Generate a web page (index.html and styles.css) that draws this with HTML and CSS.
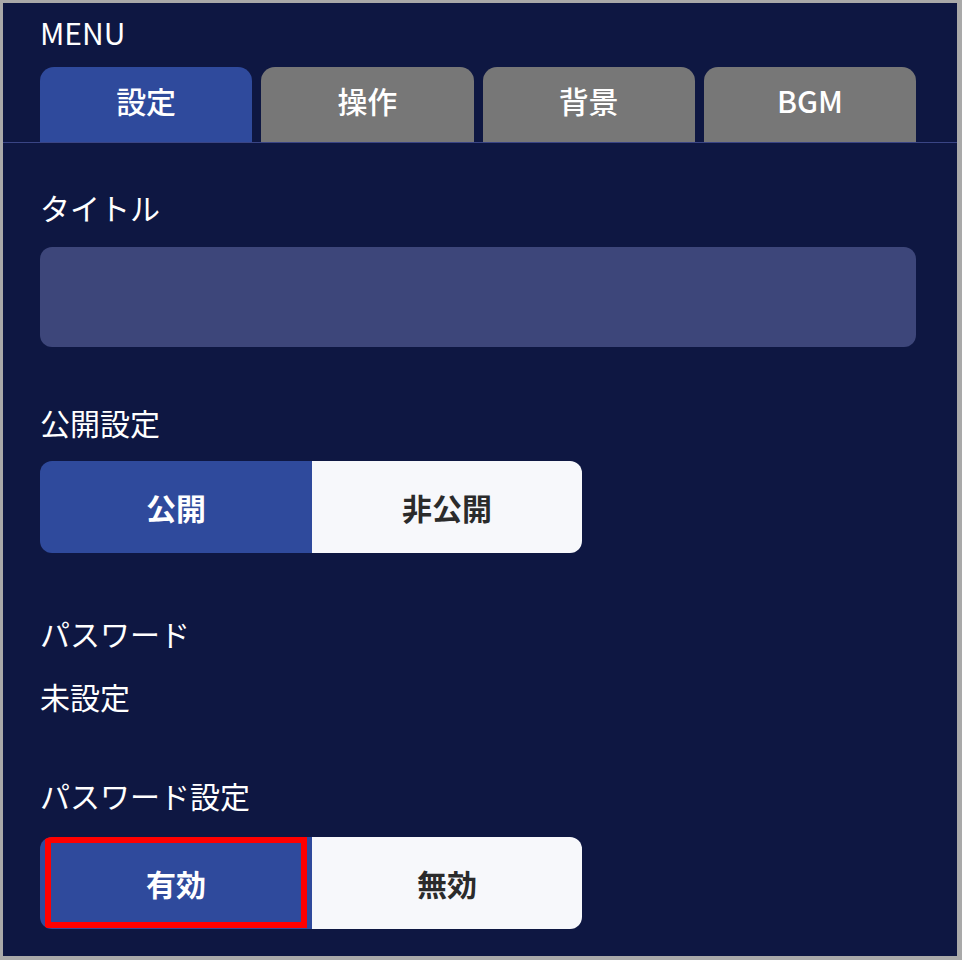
FILE: index.html
```html
<!DOCTYPE html>
<html lang="ja">

<head>
  <meta charset="UTF-8">
  <meta name="viewport" content="width=device-width, initial-scale=1.0">
  <title>MENU</title>
  <link rel="stylesheet" href="styles.css">
</head>

<body>
  <main class="panel">
    <h1 class="menu-title">MENU</h1>
    <nav class="tabs">
      <button class="tab is-active">設定</button>
      <button class="tab">操作</button>
      <button class="tab">背景</button>
      <button class="tab">BGM</button>
    </nav>

    <section class="settings">
      <div class="field field-title">
        <p class="label">タイトル</p>
        <input class="text-input" type="text">
      </div>

      <div class="field field-public">
        <p class="label">公開設定</p>
        <div class="segment">
          <button class="segment-btn is-on">公開</button>
          <button class="segment-btn">非公開</button>
        </div>
      </div>

      <div class="field field-password">
        <p class="label">パスワード</p>
        <p class="value">未設定</p>
      </div>

      <div class="field field-password-setting">
        <p class="label">パスワード設定</p>
        <div class="segment">
          <button class="segment-btn is-on">
            有効
            <span class="highlight"></span>
          </button>
          <button class="segment-btn">無効</button>
        </div>
      </div>
    </section>
  </main>
</body>

</html>
```

FILE: styles.css
```css
html {
  box-sizing: border-box;
  font-family: 'Noto Sans CJK JP', 'Noto Sans', sans-serif;
  font-size: 30px;
}

*,
*:after,
*:before {
  box-sizing: inherit;
}

body {
  margin: 0;
}

p,
h1 {
  margin: 0;
}

button,
input {
  font-family: inherit;
  font-size: inherit;
  border: none;
  outline: none;
}

.panel {
  width: 962px;
  height: 960px;
  border-style: solid;
  border-color: #a9a9a9;
  border-width: 3px 5px 4px 3px;
  background-color: #0e1742;
  color: #fff;
}

.menu-title {
  padding: 9px 0 0 37px;
  font-size: 30px;
  font-weight: 400;
  line-height: 40px;
}

.tabs {
  display: flex;
  gap: 9px;
  margin-top: 15px;
  padding: 0 41px 0 37px;
  border-bottom: 1px solid #3a4585;
}

.tab {
  flex: 1;
  height: 75px;
  border-radius: 14px 14px 0 0;
  background-color: #777;
  color: #fff;
  font-weight: 500;
  padding-bottom: 10px;
}

.tab.is-active {
  background-color: #2f4a9c;
}

.settings {
  padding: 0 41px 0 37px;
}

.label,
.value {
  line-height: 40px;
}

.field-title {
  margin-top: 44px;
}

.text-input {
  display: block;
  width: 100%;
  height: 100px;
  margin-top: 20px;
  border-radius: 12px;
  background-color: #3d467a;
  color: #fff;
  padding: 0 20px;
}

.field-public {
  margin-top: 55px;
}

.segment {
  display: flex;
  width: 542px;
  height: 92px;
  margin-top: 19px;
  border-radius: 12px;
  overflow: hidden;
}

.segment-btn {
  position: relative;
  flex: 1;
  background-color: #f7f8fb;
  color: #2b2b2b;
  font-weight: 700;
}

.segment-btn.is-on {
  flex: 0 0 272px;
  background-color: #2f4a9c;
  color: #fff;
}

.field-password {
  margin-top: 60px;
}

.value {
  margin-top: 23px;
}

.field-password-setting {
  margin-top: 59px;
}

.field-password-setting .segment {
  margin-top: 22px;
}

.highlight {
  position: absolute;
  top: 0;
  right: 5px;
  bottom: 1px;
  left: 5px;
  border: 6px solid #f00;
}
```
